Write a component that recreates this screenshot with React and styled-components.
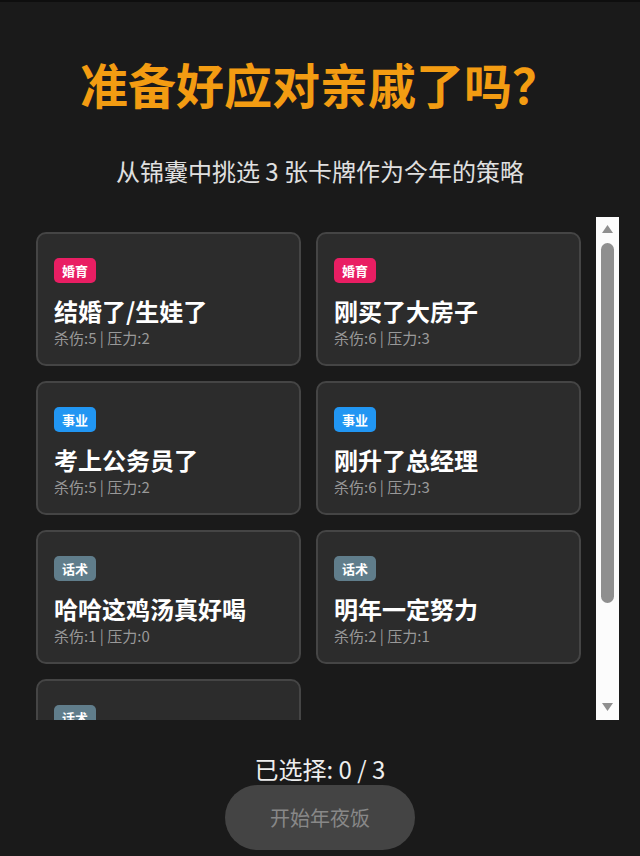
import styled, { createGlobalStyle } from 'styled-components'

const cards = [
  { tag: '婚育', title: '结婚了/生娃了', damage: 5, stress: 2 },
  { tag: '婚育', title: '刚买了大房子', damage: 6, stress: 3 },
  { tag: '事业', title: '考上公务员了', damage: 5, stress: 2 },
  { tag: '事业', title: '刚升了总经理', damage: 6, stress: 3 },
  { tag: '话术', title: '哈哈这鸡汤真好喝', damage: 1, stress: 0 },
  { tag: '话术', title: '明年一定努力', damage: 2, stress: 1 },
  { tag: '话术', title: '我还在找方向', damage: 1, stress: 1 }
]

const tagColors = {
  婚育: '#e91e63',
  事业: '#2196f3',
  话术: '#607d8b'
}

const GlobalStyle = createGlobalStyle`
  html, body {
    margin: 0;
    padding: 0;
    background: #1a1a1a;
  }
  body {
    border-top: 2px solid #0e0e0e;
    font-family: "Noto Sans CJK SC", "Noto Sans", sans-serif;
    color: #fff;
  }
`

export default function App() {
  return (
    <Page>
      <GlobalStyle />
      <Title>准备好应对亲戚了吗？</Title>
      <Subtitle>从锦囊中挑选 3 张卡牌作为今年的策略</Subtitle>
      <ListFrame>
        <CardList>
          {cards.map(({ tag, title, damage, stress }, key) => (
            <Card key={key}>
              <Tag color={tagColors[tag]}>{tag}</Tag>
              <CardTitle>{title}</CardTitle>
              <Stats>杀伤:{damage} | 压力:{stress}</Stats>
            </Card>
          ))}
        </CardList>
        <ScrollTrack>
          <Arrow viewBox="0 0 11 8" width="11" height="8">
            <path d="M5.5 0L11 8H0z" />
          </Arrow>
          <Thumb />
          <Arrow viewBox="0 0 11 8" width="11" height="8">
            <path d="M0 0h11L5.5 8z" />
          </Arrow>
        </ScrollTrack>
      </ListFrame>
      <Counter>已选择: 0 / 3</Counter>
      <StartButton disabled>开始年夜饭</StartButton>
    </Page>
  )
}

const Page = styled.div`
  display: flex;
  flex-direction: column;
  align-items: center;
  padding: 0 20px;
  text-align: center;
`

const Title = styled.h1`
  margin: 46px 0 35px;
  font-size: 48px;
  line-height: 70px;
  font-weight: 700;
  color: #f39c12;
`

const Subtitle = styled.p`
  margin: 0 0 28px;
  font-size: 24px;
  line-height: 36px;
  color: #e0e0e0;
`

const ListFrame = styled.div`
  display: flex;
  width: 598px;
  height: 503px;
`

const CardList = styled.div`
  flex: 1;
  box-sizing: border-box;
  padding: 15px 15px 28px;
  overflow-y: auto;
  scrollbar-width: none;
  display: grid;
  grid-template-columns: 1fr 1fr;
  grid-auto-rows: 134px;
  gap: 15px;
  align-content: start;
`

const ScrollTrack = styled.div`
  display: flex;
  flex-direction: column;
  align-items: center;
  width: 23px;
  padding: 8px 0 9px;
  box-sizing: border-box;
  background: #fcfcfc;
`

const Arrow = styled.svg`
  display: block;
  fill: #8f8f8f;
  &:last-child {
    margin-top: auto;
  }
`

const Thumb = styled.div`
  width: 13px;
  height: 360px;
  margin-top: 10px;
  border-radius: 7px;
  background: #8f8f8f;
`

const Card = styled.div`
  box-sizing: border-box;
  display: flex;
  flex-direction: column;
  align-items: flex-start;
  padding: 24px 16px 15px;
  background: #2c2c2c;
  border: 2px solid #454545;
  border-radius: 10px;
  text-align: left;
`

const Tag = styled.span`
  padding: 3px 8px;
  border-radius: 5px;
  background: ${({ color }) => color};
  font-size: 13px;
  line-height: 19px;
  font-weight: 700;
  color: #fff;
`

const CardTitle = styled.div`
  margin-top: 10px;
  font-size: 24px;
  line-height: 35px;
  font-weight: 700;
  color: #fff;
`

const Stats = styled.div`
  font-size: 15px;
  line-height: 20px;
  color: #999;
`

const Counter = styled.div`
  margin-top: 33px;
  font-size: 24px;
  line-height: 32px;
  color: #eee;
`

const StartButton = styled.button`
  width: 190px;
  height: 65px;
  border: none;
  border-radius: 33px;
  background: #444;
  font-family: inherit;
  font-size: 20px;
  color: #888;
`
